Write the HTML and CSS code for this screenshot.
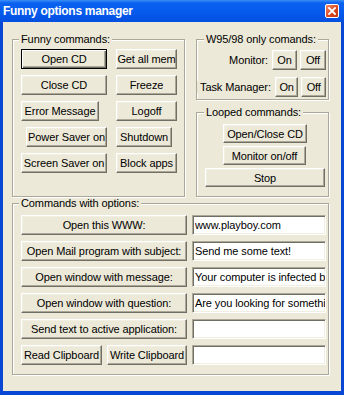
FILE: index.html
```html
<!DOCTYPE html>
<html lang="en">
<head>
    <meta charset="UTF-8">
    <title>Funny options manager</title>
    <link rel="stylesheet" href="styles.css">
</head>
<body>
    <div class="window">
        <!-- Barra de titulo -->
        <div class="titlebar">
            <span class="title">Funny options manager</span>
            <span class="close">
                <svg width="8" height="8" viewBox="0 0 8 8">
                    <path d="M1 1 L7 7 M7 1 L1 7" stroke="#fff" stroke-width="1.8" stroke-linecap="square"/>
                </svg>
            </span>
        </div>

        <div class="client">
            <div class="top">
                <!-- Comandos divertidos -->
                <fieldset class="group funny">
                    <legend>Funny commands:</legend>
                    <div class="funny-grid">
                        <button class="btn default">Open CD</button>
                        <button class="btn">Get all mem</button>
                        <button class="btn">Close CD</button>
                        <button class="btn">Freeze</button>
                        <button class="btn error">Error Message</button>
                        <button class="btn">Logoff</button>
                        <button class="btn power">Power Saver on</button>
                        <button class="btn shutdown">Shutdown</button>
                        <button class="btn">Screen Saver on</button>
                        <button class="btn">Block apps</button>
                    </div>
                </fieldset>

                <div class="side">
                    <fieldset class="group w95">
                        <legend>W95/98 only comands:</legend>
                        <div class="onoff">
                            <span class="label">Monitor:</span>
                            <button class="btn on">On</button>
                            <button class="btn off">Off</button>
                        </div>
                        <div class="onoff">
                            <span class="label">Task Manager:</span>
                            <button class="btn on">On</button>
                            <button class="btn off">Off</button>
                        </div>
                    </fieldset>

                    <fieldset class="group looped">
                        <legend>Looped commands:</legend>
                        <button class="btn loop-cd">Open/Close CD</button>
                        <button class="btn loop-mon">Monitor on/off</button>
                        <button class="btn stop">Stop</button>
                    </fieldset>
                </div>
            </div>

            <!-- Comandos con opciones -->
            <fieldset class="group options">
                <legend>Commands with options:</legend>
                <div class="options-grid">
                    <button class="btn">Open this WWW:</button>
                    <input class="field" type="text" value="www.playboy.com">
                    <button class="btn">Open Mail program with subject:</button>
                    <input class="field" type="text" value="Send me some text!">
                    <button class="btn">Open window with message:</button>
                    <input class="field" type="text" value="Your computer is infected by a virus!">
                    <button class="btn">Open window with question:</button>
                    <input class="field" type="text" value="Are you looking for something?">
                    <button class="btn">Send text to active application:</button>
                    <input class="field" type="text" value="">
                    <div class="clip">
                        <button class="btn read">Read Clipboard</button>
                        <button class="btn write">Write Clipboard</button>
                    </div>
                    <input class="field" type="text" value="">
                </div>
            </fieldset>
        </div>
    </div>
</body>
</html>
```

FILE: styles.css
```css
* {
    margin: 0;
    padding: 0;
    box-sizing: border-box;
}

body {
    width: 344px;
    height: 395px;
    overflow: hidden;
    font-family: "Liberation Sans", Arial, sans-serif;
    font-size: 11px;
    letter-spacing: -0.1px;
    color: #000;
}

.window {
    width: 344px;
    height: 395px;
    display: flex;
    flex-direction: column;
    background: #0846d4;
}

.titlebar {
    height: 22px;
    display: flex;
    align-items: center;
    justify-content: space-between;
    padding: 0 5px 0 3px;
    background: linear-gradient(#3c8ef6 0, #0a62f0 3px, #0559ec 60%, #044fdf 100%);
    color: #fff;
}

.title {
    font-weight: bold;
    font-size: 12px;
    letter-spacing: -0.3px;
}

.close {
    width: 14px;
    height: 14px;
    display: flex;
    align-items: center;
    justify-content: center;
    background: linear-gradient(135deg, #f08a6c, #d9431a 60%, #c23a12);
    border: 1px solid #fff;
    border-radius: 2px;
}

.client {
    flex: 1;
    margin: 0 3px 4px 3px;
    background: #ece9d8;
    padding: 11px 0 0 9px;
}

.top {
    display: flex;
    gap: 11px;
}

/* Marcos tipo Windows clasico */
.group {
    border: 1px solid #aca899;
    box-shadow: inset 1px 1px #fff, 1px 1px #fff;
    min-width: 0;
}

.group legend {
    line-height: 12px;
    padding: 0 2px;
    background: #ece9d8;
}

.btn {
    font-family: "Liberation Sans", Arial, sans-serif;
    font-size: 11px;
    letter-spacing: -0.1px;
    color: #000;
    background: #ece9d8;
    border: 1px solid;
    border-color: #fff #716f64 #716f64 #fff;
    box-shadow: inset -1px -1px #aca899, inset 1px 1px #f1efe2;
    height: 20px;
    padding: 0;
    white-space: nowrap;
    text-align: center;
}

.btn.default {
    border: 1px solid #000;
    box-shadow: inset 1px 1px #fff, inset -1px -1px #716f64, inset -2px -2px #aca899;
}

.funny {
    width: 173px;
    padding: 4px 0 6px 8px;
}

.funny legend {
    margin-left: -2px;
}

.funny-grid {
    display: grid;
    grid-template-columns: 86px 61px;
    grid-auto-rows: 20px;
    column-gap: 9px;
    row-gap: 6px;
}

.funny-grid .error {
    width: 78px;
}

.funny-grid .power {
    width: 81px;
    justify-self: end;
}

.funny-grid .shutdown {
    width: 56px;
}

.side {
    width: 133px;
    display: flex;
    flex-direction: column;
}

.w95 {
    padding: 5px 2px 2px 0;
    display: flex;
    flex-direction: column;
    gap: 7px;
}

.w95 legend {
    margin-left: 7px;
}

.onoff {
    display: flex;
    justify-content: flex-end;
    align-items: center;
    gap: 3px;
}

.onoff .label {
    background: #ece9d8;
    margin-right: 1px;
    padding-left: 3px;
    white-space: nowrap;
}

.onoff .on {
    width: 25px;
}

.onoff .off {
    width: 26px;
}

.looped {
    margin-top: 6px;
    padding: 6px 0 9px 8px;
    display: flex;
    flex-direction: column;
    align-items: flex-start;
    gap: 3px;
}

.looped legend {
    margin-left: -1px;
}

.looped .btn {
    height: 19px;
}

.loop-cd {
    width: 84px;
    margin-left: 18px;
}

.loop-mon {
    width: 83px;
    margin-left: 18px;
}

.stop {
    width: 120px;
}

.options {
    width: 317px;
    padding: 6px 0 9px 8px;
}

.options legend {
    margin-left: -2px;
}

.options-grid {
    display: grid;
    grid-template-columns: 166px 134px;
    grid-auto-rows: 20px;
    column-gap: 5px;
    row-gap: 6px;
}

.clip {
    display: flex;
    gap: 5px;
}

.clip .read {
    width: 81px;
}

.clip .write {
    width: 80px;
}

.field {
    font-family: "Liberation Sans", Arial, sans-serif;
    font-size: 11px;
    letter-spacing: -0.1px;
    color: #000;
    background: #fff;
    border: 1px solid;
    border-color: #aca899 #fff #fff #aca899;
    box-shadow: inset 1px 1px #716f64, inset -1px -1px #f1efe2;
    padding: 0 0 0 2px;
    height: 20px;
    outline: none;
}
```
